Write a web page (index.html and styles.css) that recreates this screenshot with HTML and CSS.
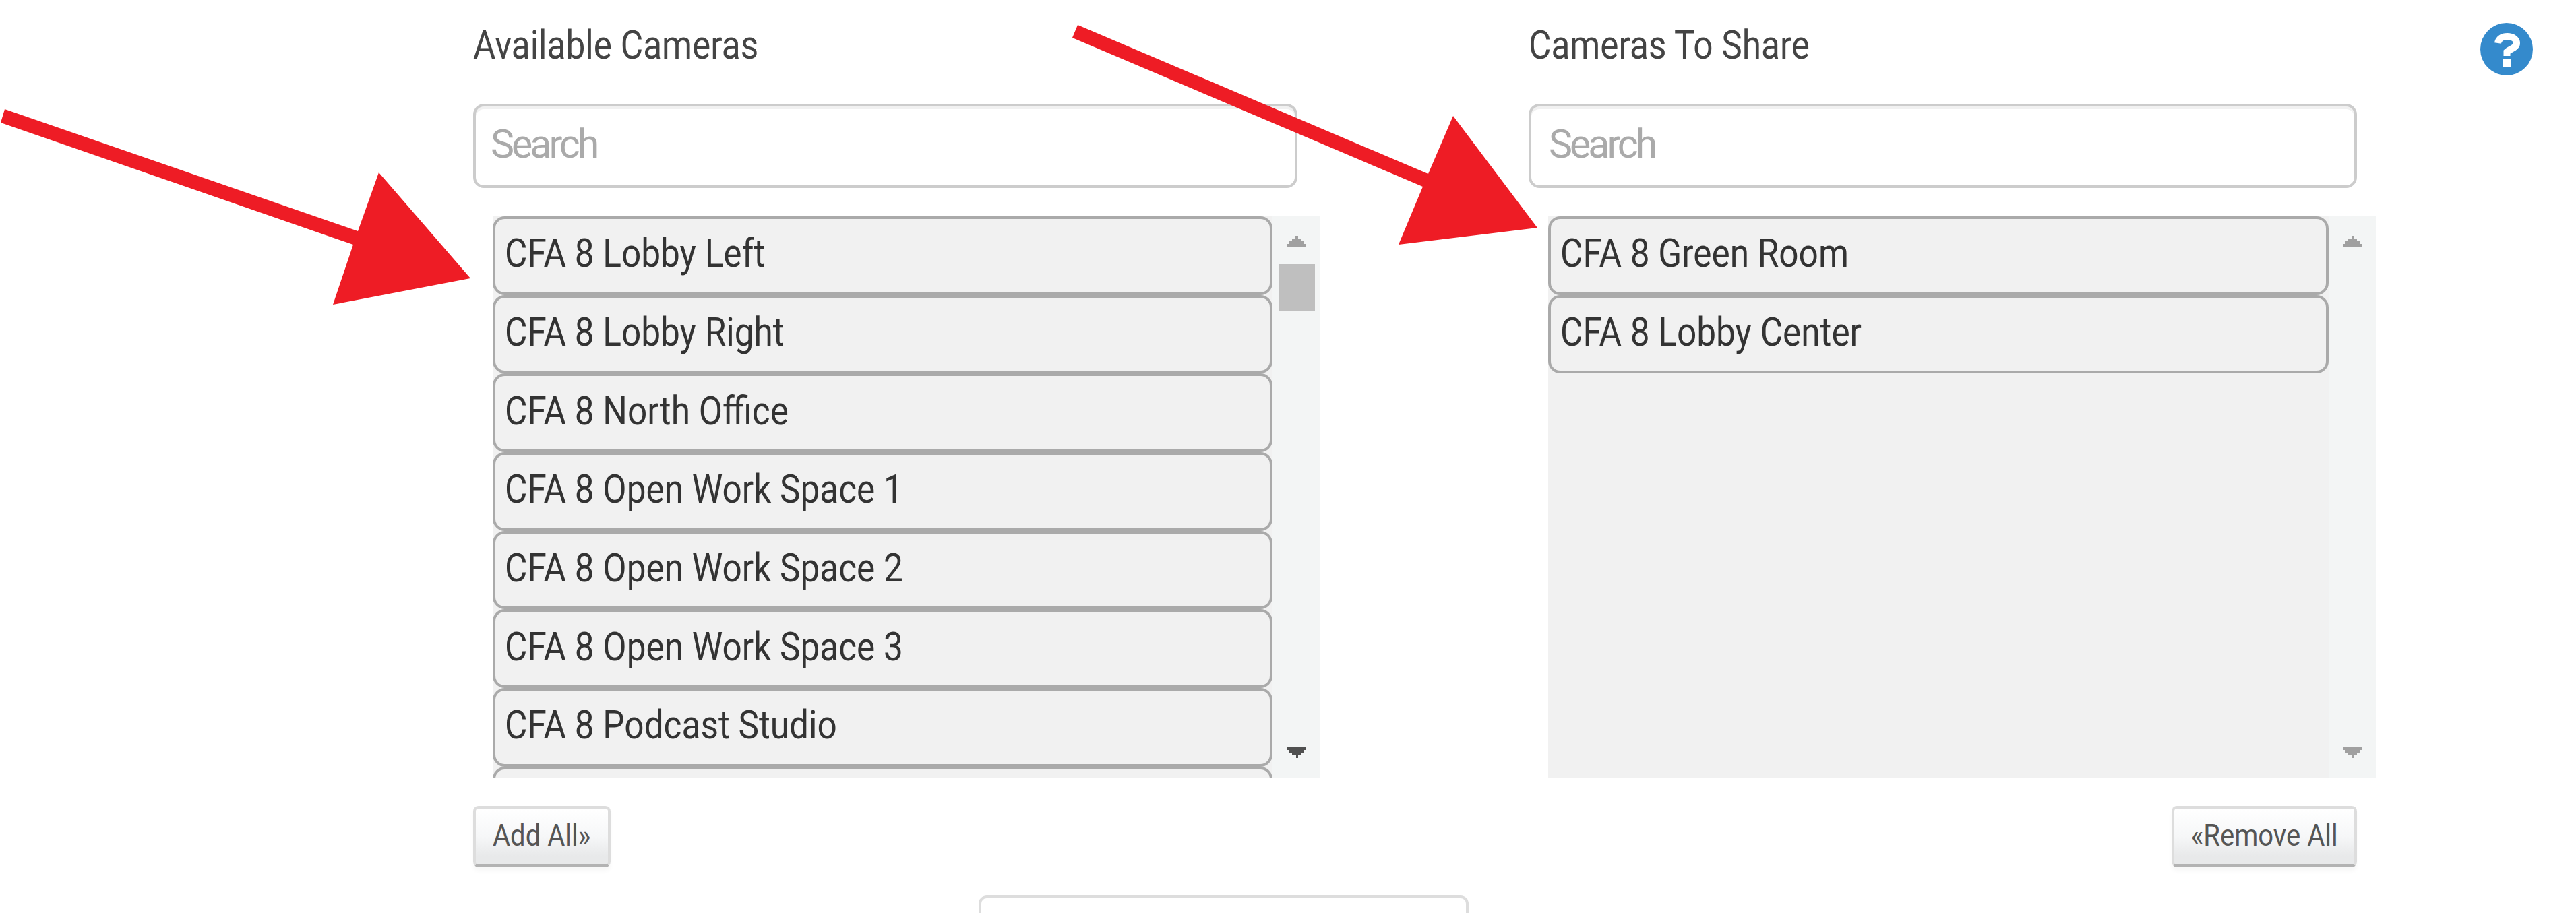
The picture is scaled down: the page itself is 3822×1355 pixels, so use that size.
FILE: index.html
```html
<!DOCTYPE html>
<html lang="en">
<head>
    <meta charset="UTF-8">
    <title>Share Cameras</title>
    <link rel="stylesheet" href="styles.css">
</head>
<body>
    <div class="panels">
        <div class="col col-left">
            <div class="col-title"><span class="narrow">Available Cameras</span></div>
            <input class="search search-left" type="text" placeholder="Search">
            <div class="list">
                <div class="items">
                    <div class="cam"><span class="narrow">CFA 8 Lobby Left</span></div>
                    <div class="cam"><span class="narrow">CFA 8 Lobby Right</span></div>
                    <div class="cam"><span class="narrow">CFA 8 North Office</span></div>
                    <div class="cam"><span class="narrow">CFA 8 Open Work Space 1</span></div>
                    <div class="cam"><span class="narrow">CFA 8 Open Work Space 2</span></div>
                    <div class="cam"><span class="narrow">CFA 8 Open Work Space 3</span></div>
                    <div class="cam"><span class="narrow">CFA 8 Podcast Studio</span></div>
                    <div class="cam"></div>
                </div>
                <div class="scroll">
                    <svg class="arrow" viewBox="0 0 29 17"><path class="arrow-off" d="M13 0h4v4h4v4h4v4h4v5H0v-5h4V8h4V4h5z"/></svg>
                    <div class="thumb"></div>
                    <svg class="arrow arrow-down" viewBox="0 0 29 17"><path class="arrow-on" d="M0 0h29v5h-4v4h-4v4h-4v4h-3v-4H8V9H4V5H0z"/></svg>
                </div>
            </div>
            <div class="actions">
                <button class="btn btn-add"><span class="btn-text">Add All»</span></button>
            </div>
        </div>
        <div class="col col-right">
            <div class="col-title"><span class="narrow">Cameras To Share</span></div>
            <input class="search search-right" type="text" placeholder="Search">
            <div class="list">
                <div class="items">
                    <div class="cam"><span class="narrow">CFA 8 Green Room</span></div>
                    <div class="cam"><span class="narrow">CFA 8 Lobby Center</span></div>
                </div>
                <div class="scroll">
                    <svg class="arrow" viewBox="0 0 29 17"><path class="arrow-off" d="M13 0h4v4h4v4h4v4h4v5H0v-5h4V8h4V4h5z"/></svg>
                    <svg class="arrow arrow-down" viewBox="0 0 29 17"><path class="arrow-off" d="M0 0h29v5h-4v4h-4v4h-4v4h-3v-4H8V9H4V5H0z"/></svg>
                </div>
            </div>
            <div class="actions actions-right">
                <button class="btn btn-remove"><span class="btn-text">«Remove All</span></button>
            </div>
        </div>
        <svg class="help" viewBox="0 0 80 80">
            <circle cx="40" cy="40" r="39" fill="#348acc"/>
            <path d="M27 31C28 24 34 21 41 21C49 21 55 25 55 31C55 38 46 39 40.500 44V50" fill="none" stroke="#fff" stroke-width="10"/>
            <rect x="34" y="55" width="13" height="11" fill="#fff"/>
        </svg>
    </div>
    <div class="save-btn"></div>

    <svg class="arrows" viewBox="0 0 3822 1355">
        <polygon points="7,162 531,343 562,256 698,413 494,452 524,363 1,182"/>
        <polygon points="1599,37 2119,258 2156,172 2281,338 2075,363 2111,277 1591,56"/>
    </svg>
</body>
</html>
```

FILE: styles.css
```css
html, body{
    margin: 0;
    height: 1355px;
    overflow: hidden;
    background: #fff;
}
body{
    position: relative;
    font-family: Roboto, sans-serif;
    font-size: 59px;
    color: #333;
}
.panels{
    display: flex;
    padding: 32px 0 0 702px;
}
.col-left{
    width: 1257px;
    margin-right: 309px;
}
.col-right{
    width: 1258px;
}
.col-title{
    height: 70px;
    line-height: 70px;
    margin-bottom: 52px;
    color: #444;
    white-space: nowrap;
}
.narrow{
    display: inline-block;
    transform: scaleX(.87);
    transform-origin: left center;
}
.search{
    display: block;
    box-sizing: border-box;
    height: 125px;
    padding: 0 22px 6px;
    border: 4px solid #ccc;
    border-radius: 16px;
    box-shadow: inset 0 4px 0 #f1f1f1;
    font-family: Roboto, sans-serif;
    font-size: 59px;
    outline: none;
}
.search::placeholder{
    color: #aaa;
    letter-spacing: -4px;
}
.search-left{
    width: 1223px;
}
.search-right{
    width: 1229px;
    padding-left: 26px;
}
.list{
    display: flex;
    height: 833px;
    margin: 42px 0 0 29px;
    background: #f1f1f1;
}
.items{
    flex: 1;
    overflow: hidden;
}
.cam{
    display: flex;
    align-items: center;
    box-sizing: border-box;
    height: 116.67px;
    padding: 0 0 7px 14px;
    background: #f1f1f1;
    border: 4px solid #aaa;
    border-radius: 18px;
    white-space: nowrap;
}
.scroll{
    display: flex;
    flex-direction: column;
    align-items: center;
    box-sizing: border-box;
    width: 71px;
    padding: 29px 0;
    background: #f3f5f5;
}
.arrow{
    display: block;
    width: 29px;
    height: 17px;
}
.arrow-down{
    margin-top: auto;
}
.arrow-off{
    fill: #a0a0a0;
}
.arrow-on{
    fill: #505050;
}
.thumb{
    width: 54px;
    height: 70px;
    margin-top: 25px;
    background: #bfbfbf;
}
.actions{
    margin-top: 42px;
}
.actions-right{
    display: flex;
    justify-content: flex-end;
    width: 1229px;
}
.btn{
    display: flex;
    align-items: center;
    justify-content: center;
    box-sizing: border-box;
    height: 91px;
    padding: 0 0 5px;
    background: linear-gradient(#fff 0%, #f6f7f8 50%, #e8e9ea 85%);
    border: 4px solid #ddd;
    border-bottom-color: #b3b3b3;
    border-radius: 8px;
    box-shadow: 0 6px 6px rgba(0, 0, 0, .03);
    font-family: Roboto, sans-serif;
    font-size: 45px;
    color: #555;
}
.btn-add{
    width: 204px;
}
.btn-remove{
    width: 275px;
}
.btn-text{
    transform: scaleX(.89);
    white-space: nowrap;
}
.help{
    width: 80px;
    height: 80px;
    margin: 1px 0 0 153px;
}
.save-btn{
    box-sizing: border-box;
    width: 727px;
    height: 26px;
    margin: 42px 0 0 1452px;
    background: #fff;
    border: 4px solid #ddd;
    border-bottom: none;
    border-radius: 12px 12px 0 0;
}
.arrows{
    position: absolute;
    top: 0;
    left: 0;
    width: 3822px;
    height: 1355px;
    fill: #ee1c25;
    pointer-events: none;
}
```
